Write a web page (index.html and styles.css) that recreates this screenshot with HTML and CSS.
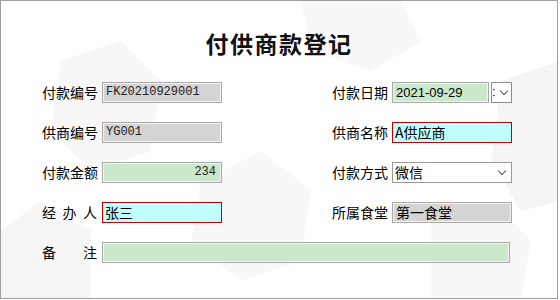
FILE: index.html
```html
<!DOCTYPE html>
<html lang="zh-CN">
<head>
    <meta charset="UTF-8">
    <title>付供商款登记</title>
    <link rel="stylesheet" href="styles.css">
</head>
<body>

<div class="frame">
    <svg class="backdrop" width="558" height="299" viewBox="0 0 558 299">
        <polygon points="60,60 120,40 160,80 150,150 90,170 50,130" fill="#f7f7f7"/>
        <polygon points="0,230 40,200 90,230 90,299 0,299" fill="#f6f6f6"/>
        <polygon points="200,180 260,150 310,190 300,260 240,280 190,240" fill="#f8f8f8"/>
        <polygon points="300,0 400,0 420,40 370,70 310,50" fill="#f8f8f8"/>
        <polygon points="500,80 558,60 558,200 520,210 490,160" fill="#f5f5f5"/>
        <polygon points="430,220 490,200 530,240 520,299 430,299" fill="#f8f8f8"/>
    </svg>

    <h1 class="title">付供商款登记</h1>

    <div class="form">
        <div class="row">
            <div class="pair">
                <span class="label">付款编号</span>
                <div class="field readonly mono">FK20210929001</div>
            </div>
            <div class="pair">
                <span class="label">付款日期</span>
                <div class="date">
                    <div class="field money sans short">2021-09-29</div>
                    <div class="picker"><span class="colon">:</span><span class="chev"></span></div>
                </div>
            </div>
        </div>
        <div class="row">
            <div class="pair">
                <span class="label">供商编号</span>
                <div class="field readonly mono">YG001</div>
            </div>
            <div class="pair">
                <span class="label">供商名称</span>
                <div class="field required">A供应商</div>
            </div>
        </div>
        <div class="row">
            <div class="pair">
                <span class="label">付款金额</span>
                <div class="field money mono num">234</div>
            </div>
            <div class="pair">
                <span class="label">付款方式</span>
                <div class="field select">微信<span class="chev"></span></div>
            </div>
        </div>
        <div class="row">
            <div class="pair">
                <span class="label">经办人</span>
                <div class="field required">张三</div>
            </div>
            <div class="pair">
                <span class="label">所属食堂</span>
                <div class="field readonly">第一食堂</div>
            </div>
        </div>
        <div class="row">
            <div class="pair">
                <span class="label">备注</span>
                <div class="field money wide"></div>
            </div>
        </div>
    </div>
</div>

</body>
</html>
```

FILE: styles.css
```css
body {
    margin: 0;
    background: #ffffff;
    font-family: "Noto Sans CJK SC", "Liberation Sans", sans-serif;
    color: #000;
}
.frame {
    position: relative;
    width: 558px;
    height: 299px;
    box-sizing: border-box;
    border: 1px solid #a0a0a0;
    background: #fff;
    overflow: hidden;
}
.backdrop {
    position: absolute;
    left: 0;
    top: 0;
    z-index: 0;
}
.title {
    position: relative;
    margin: 27px 0 0;
    text-align: center;
    font-size: 23px;
    line-height: 30px;
    font-weight: bold;
    color: #111;
    letter-spacing: 1.5px;
}
.form {
    position: relative;
    margin-top: 24px;
    padding-left: 41px;
    display: flex;
    flex-direction: column;
    gap: 19px;
}
.row {
    display: flex;
    gap: 110px;
}
.pair {
    display: flex;
    align-items: center;
    gap: 5px;
}
.label {
    width: 55px;
    font-size: 14px;
    line-height: 21px;
    text-align: justify;
    text-align-last: justify;
    white-space: nowrap;
}
.field {
    width: 120px;
    height: 21px;
    box-sizing: border-box;
    border: 1px solid #a8a8a8;
    box-shadow: inset 0 0 0 1px #f4f4f4;
    padding: 0 3px;
    font-size: 14px;
    line-height: 19px;
    white-space: nowrap;
    overflow: hidden;
}
.readonly {
    background: #d4d4d4;
}
.money {
    background: #cce8cc;
}
.required {
    background: #c0ffff;
    border-color: #c00000;
    box-shadow: none;
    padding-left: 2px;
}
.mono {
    font-family: "Liberation Mono", monospace;
    font-size: 12px;
    font-weight: normal;
    color: #222;
}
.sans {
    font-family: "Liberation Sans", sans-serif;
    font-size: 13px;
}
.num {
    text-align: right;
    padding-right: 5px;
}
.select {
    position: relative;
    background: #fff;
    border-color: #9a9a9a;
    box-shadow: none;
    padding-left: 2px;
}
.wide {
    width: 408px;
}
.date {
    display: flex;
    gap: 2px;
}
.short {
    width: 97px;
}
.picker {
    position: relative;
    width: 21px;
    height: 21px;
    box-sizing: border-box;
    border: 1px solid #8c8c8c;
    background: #fff;
}
.colon {
    position: absolute;
    left: 0;
    top: 0;
    font-family: "Liberation Sans", sans-serif;
    font-size: 13px;
    line-height: 18px;
}
.chev {
    position: absolute;
    right: 6px;
    top: 5px;
    width: 5px;
    height: 5px;
    border-right: 1px solid #555;
    border-bottom: 1px solid #555;
    transform: rotate(45deg);
}
.picker .chev {
    right: 4px;
}
```
